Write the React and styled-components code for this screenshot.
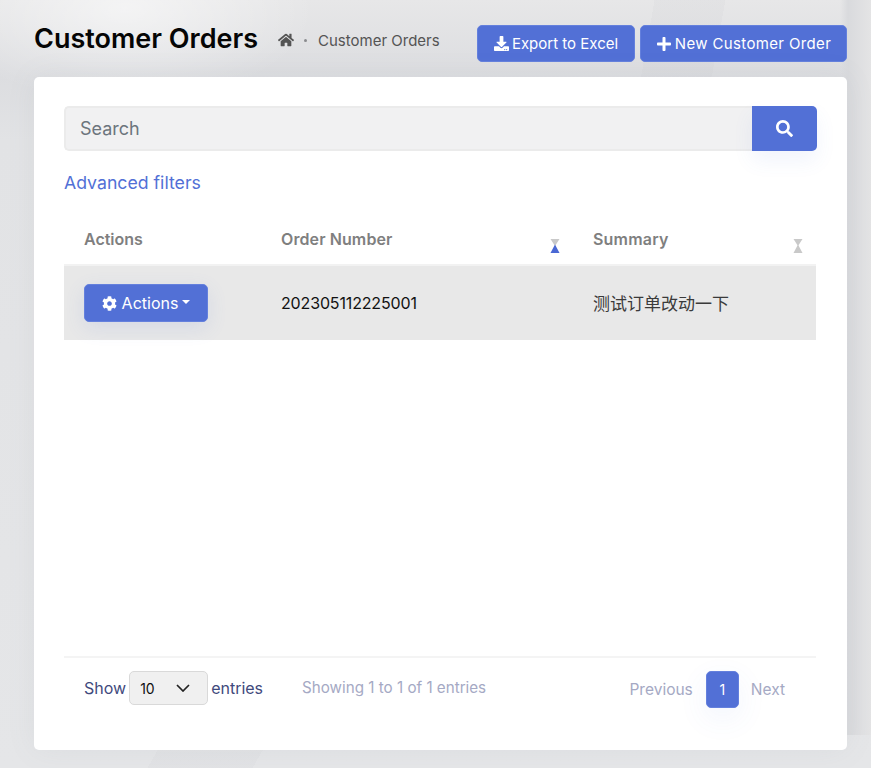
import React from "react";
import styled, { createGlobalStyle } from "styled-components";
import { FaHome, FaDownload, FaPlus, FaSearch, FaCog } from "react-icons/fa";

const FONT = `Inter, "Noto Sans CJK SC", sans-serif`;
const BLUE = "#5270d6";

const GlobalStyle = createGlobalStyle`
  html, body {
    margin: 0;
    height: 768px;
    overflow: hidden;
  }
  body {
    font-family: ${FONT};
    background-color: #e5e6e8;
    background-repeat: no-repeat;
    background-image:
      radial-gradient(ellipse 190px 95px at 125px 8px, rgba(255, 255, 255, 0.55), transparent),
      linear-gradient(100deg, transparent 0 74%, rgba(200, 201, 206, 0.14) 74% 82%, transparent 82%),
      linear-gradient(90deg, transparent 0 840px, #d9dadd 848px, #e4e4e5 871px),
      linear-gradient(120deg, transparent 0 12%, rgba(200, 201, 206, 0.12) 12% 20%, transparent 20%),
      linear-gradient(180deg, #e7e7e8 0, #dcdde0 76px, #e2e3e5 140px, #e5e6e8 768px);
    background-size: 871px 90px, 871px 77px, 871px 735px, 871px 100%, 871px 100%;
    background-position: 0 0, 0 0, 0 0, 0 750px, 0 0;
  }
`;

const Page = styled.div`
  box-sizing: border-box;
  height: 768px;
  padding: 25px 24px 18px 34px;
  display: flex;
  flex-direction: column;
  gap: 15px;
`;

const Header = styled.header`
  display: flex;
  justify-content: space-between;
  align-items: flex-start;
  height: 37px;
`;

const TitleGroup = styled.div`
  display: flex;
  align-items: center;
  height: 26px;
`;

const Title = styled.h1`
  margin: 0 20px 0 0;
  font-size: 27px;
  line-height: 27px;
  font-weight: 600;
  color: #050505;
`;

const Crumbs = styled.nav`
  display: flex;
  align-items: center;
  color: #545454;
  font-size: 15px;
  margin-top: 4px;
  svg {
    font-size: 16px;
  }
`;

const Dot = styled.span`
  width: 3px;
  height: 3px;
  border-radius: 50%;
  background: #8a8b8e;
  margin: 0 11px 0 10px;
`;

const ButtonRow = styled.div`
  display: flex;
  gap: 5px;
`;

const Button = styled.button`
  box-sizing: border-box;
  height: 37px;
  width: ${(p) => p.$width}px;
  border: 1px solid #6480dd;
  border-radius: 5px;
  background: ${BLUE};
  color: #fff;
  font-family: ${FONT};
  font-size: 15px;
  letter-spacing: ${(p) => p.$tracking || 0}px;
  display: inline-flex;
  align-items: center;
  justify-content: center;
  gap: 3px;
  padding: 0;
  svg {
    font-size: ${(p) => p.$iconSize || 15}px;
  }
`;

const Card = styled.main`
  flex: 1;
  background: #fff;
  border-radius: 5px;
  padding: 29px 30px 0;
  display: flex;
  flex-direction: column;
  box-shadow: 0 0 30px rgba(120, 125, 140, 0.08);
`;

const SearchBar = styled.div`
  display: flex;
  height: 45px;
`;

const SearchInput = styled.input`
  flex: 1;
  min-width: 0;
  box-sizing: border-box;
  border: 2px solid #ebebeb;
  border-right: 0;
  border-radius: 5px 0 0 5px;
  background: #f1f1f2;
  padding: 0 15px 1px 14px;
  font-family: ${FONT};
  font-size: 18px;
  color: #6c757d;
  &::placeholder {
    color: #6c757d;
    opacity: 1;
  }
`;

const SearchButton = styled.button`
  width: 65px;
  border: 0;
  border-radius: 0 5px 5px 0;
  background: ${BLUE};
  color: #fff;
  font-size: 17px;
  display: flex;
  align-items: center;
  justify-content: center;
  box-shadow: 0 10px 20px rgba(82, 112, 214, 0.08);
`;

const FilterLink = styled.a`
  margin-top: 22px;
  line-height: 20px;
  font-size: 17.7px;
  color: ${BLUE};
`;

const Table = styled.table`
  margin-top: 22px;
  width: 752px;
  border-collapse: collapse;
  table-layout: fixed;
`;

const HeadCell = styled.th`
  position: relative;
  height: 50px;
  padding: 0 0 2px 20px;
  text-align: left;
  font-size: 16px;
  font-weight: 600;
  letter-spacing: ${(p) => p.$tracking || 0}px;
  color: #7f7f7f;
  border-bottom: 2px solid #f2f2f2;
  width: ${(p) => p.$width}px;
  box-sizing: border-box;
`;

const SortIcon = styled.svg`
  position: absolute;
  right: 13px;
  bottom: 11px;
`;

const Row = styled.tr`
  background: #e8e8e8;
`;

const Cell = styled.td`
  box-sizing: border-box;
  height: 75px;
  padding: 0 0 0 20px;
  font-size: 16px;
  letter-spacing: ${(p) => p.$tracking || 0}px;
  color: #111;
`;

const SummaryCell = styled(Cell)`
  padding-bottom: 2px;
  font-size: 17px;
  color: #3a3a3a;
`;

const ActionsButton = styled(Button)`
  width: 124px;
  height: 38px;
  font-size: 16px;
  gap: 5px;
  box-shadow: 0 6px 20px rgba(82, 112, 214, 0.12);
`;

const Caret = styled.span`
  width: 0;
  height: 0;
  border-left: 4.5px solid transparent;
  border-right: 4.5px solid transparent;
  border-top: 4.5px solid #fff;
  margin: 0 0 3px -1px;
`;

const Spacer = styled.div`
  flex: 1;
`;

const Footer = styled.footer`
  border-top: 2px solid #f4f4f4;
  height: 94px;
  box-sizing: border-box;
  margin-right: 1px;
  padding: 13px 31px 0 20px;
  display: flex;
  align-items: flex-start;
`;

const Length = styled.div`
  display: flex;
  align-items: center;
  gap: 3px;
  height: 34px;
  font-size: 16px;
  color: #3f4a7d;
`;

const SelectBox = styled.div`
  box-sizing: border-box;
  width: 79px;
  height: 34px;
  border: 1px solid #d9d9d9;
  border-radius: 5px;
  background: #f0f0f0;
  color: #111;
  font-size: 14px;
  display: flex;
  align-items: center;
  justify-content: space-between;
  padding: 0 17px 0 10px;
`;

const Info = styled.div`
  margin-left: 39px;
  height: 34px;
  line-height: 34px;
  font-size: 15.2px;
  color: #a5a9c4;
`;

const Pager = styled.div`
  margin-left: auto;
  display: flex;
  align-items: center;
  gap: 12px;
  height: 37px;
  font-size: 15.5px;
  color: #a5a9c4;
`;

const PageNumber = styled.span`
  box-sizing: border-box;
  width: 33px;
  height: 37px;
  margin-left: 1px;
  border: 1px solid #6480dd;
  border-radius: 5px;
  background: ${BLUE};
  color: #fff;
  font-size: 14px;
  display: flex;
  align-items: center;
  justify-content: center;
  box-shadow: 0 10px 30px rgba(82, 112, 214, 0.08);
`;

const Sort = ({ active }) => (
  <SortIcon width="10" height="14" viewBox="0 0 10 14">
    <path d="M0.5 0H9.5L5 7Z" fill="#c9c9c9" />
    <path d="M5 5.5L9.5 14H0.5Z" fill={active ? "#4a68d4" : "#c9c9c9"} />
  </SortIcon>
);

export default function App() {
  return (
    <>
      <GlobalStyle />
      <Page>
        <Header>
          <TitleGroup>
            <Title>Customer Orders</Title>
            <Crumbs>
              <FaHome />
              <Dot />
              Customer Orders
            </Crumbs>
          </TitleGroup>
          <ButtonRow>
            <Button $width={158}>
              <FaDownload />
              Export to Excel
            </Button>
            <Button $width={207} $tracking={0.35} $iconSize={16}>
              <FaPlus />
              New Customer Order
            </Button>
          </ButtonRow>
        </Header>
        <Card>
          <SearchBar>
            <SearchInput placeholder="Search" />
            <SearchButton>
              <FaSearch />
            </SearchButton>
          </SearchBar>
          <FilterLink>Advanced filters</FilterLink>
          <Table>
            <thead>
              <tr>
                <HeadCell $width={197}>Actions</HeadCell>
                <HeadCell $width={312} $tracking={0.1}>
                  Order Number
                  <Sort active />
                </HeadCell>
                <HeadCell $width={243} $tracking={0.2}>
                  Summary
                  <Sort />
                </HeadCell>
              </tr>
            </thead>
            <tbody>
              <Row>
                <Cell>
                  <ActionsButton>
                    <FaCog />
                    Actions
                    <Caret />
                  </ActionsButton>
                </Cell>
                <Cell $tracking={-0.15}>202305112225001</Cell>
                <SummaryCell>测试订单改动一下</SummaryCell>
              </Row>
            </tbody>
          </Table>
          <Spacer />
          <Footer>
            <Length>
              Show
              <SelectBox>
                10
                <svg width="14" height="8" viewBox="0 0 14 8" fill="none">
                  <path d="M1 1L7 7L13 1" stroke="#222" strokeWidth="1.7" />
                </svg>
              </SelectBox>
              entries
            </Length>
            <Info>Showing 1 to 1 of 1 entries</Info>
            <Pager>
              Previous
              <PageNumber>1</PageNumber>
              Next
            </Pager>
          </Footer>
        </Card>
      </Page>
    </>
  );
}
